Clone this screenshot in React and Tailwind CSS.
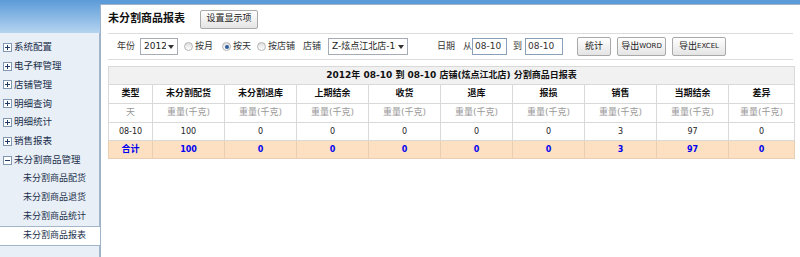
import React from "react";

const font = { fontFamily: '"DejaVu Sans", "Noto Sans CJK SC", sans-serif' };

const menu = ["系统配置", "电子秤管理", "店铺管理", "明细查询", "明细统计", "销售报表"];
const subMenu = ["未分割商品配货", "未分割商品退货", "未分割商品统计"];

const cols = ["未分割配货", "未分割退库", "上期结余", "收货", "退库", "报损", "销售", "当期结余", "差异"];
const values = ["100", "0", "0", "0", "0", "0", "3", "97", "0"];

function BoxIcon({ minus }) {
  return (
    <svg width="9" height="9" viewBox="0 0 9 9" className="shrink-0">
      <rect x="0.5" y="0.5" width="8" height="8" fill="#fff" stroke="#7f97b2" />
      <line x1="2" y1="4.5" x2="7" y2="4.5" stroke="#1f3b66" />
      {!minus && <line x1="4.5" y1="2" x2="4.5" y2="7" stroke="#1f3b66" />}
    </svg>
  );
}

function Radio({ checked, className }) {
  return (
    <span className={`shrink-0 w-[9px] h-[9px] rounded-full border border-[#b4b4b4] bg-gradient-to-b from-[#dedede] to-white flex items-center justify-center ${className}`}>
      {checked && <span className="w-[4px] h-[4px] rounded-full bg-[#2c5d9c]" />}
    </span>
  );
}

function Select({ w, className, children }) {
  return (
    <div className={`shrink-0 h-[17px] border border-[#a5acb5] bg-white flex items-center justify-between pl-[3px] pr-[3px] ${w} ${className}`}>
      <span className="text-[9px] text-[#222] whitespace-nowrap overflow-hidden">{children}</span>
      <svg width="6" height="4" viewBox="0 0 6 4" className="shrink-0 ml-[2px]">
        <path d="M0 0h6L3 4z" fill="#333" />
      </svg>
    </div>
  );
}

function Btn({ children, w, className }) {
  return (
    <div className={`shrink-0 h-[19px] border border-[#a9a9a9] rounded-[2px] bg-gradient-to-b from-white to-[#e4e4e4] flex items-center justify-center text-[9px] text-[#222] whitespace-nowrap ${w} ${className}`}>
      {children}
    </div>
  );
}

function Label({ w, className, children }) {
  return <span className={`shrink-0 whitespace-nowrap ${w} ${className}`}>{children}</span>;
}

export default function App() {
  return (
    <div className="w-[800px] h-[257px] flex bg-white overflow-hidden text-[9px]" style={font}>
      {/* Sidebar */}
      <div className="w-[100px] flex flex-col shrink-0">
        <div className="h-[33px] bg-gradient-to-b from-[#5b9bd8] to-[#b5d4f0]" />
        <div className="h-[193px] bg-[#e9eff6] border-r border-[#a3b6ca] pt-[5px] flex flex-col">
          {menu.map((m) => (
            <div key={m} className="h-[19px] flex items-center gap-[2px] pl-[3px] text-[#1b2f4c] text-[9.5px] whitespace-nowrap">
              <BoxIcon />
              <span>{m}</span>
            </div>
          ))}
          <div className="h-[19px] flex items-center gap-[2px] pl-[3px] text-[#1b2f4c] text-[9.5px] whitespace-nowrap">
            <BoxIcon minus />
            <span>未分割商品管理</span>
          </div>
          {subMenu.map((m) => (
            <div key={m} className="h-[19px] flex items-center pl-[23px] text-[#1b2f4c] whitespace-nowrap">
              {m}
            </div>
          ))}
        </div>
        <div className="h-[19px] bg-white flex items-center pl-[23px] text-[#1b2f4c] border-t border-[#a3b6ca] whitespace-nowrap">
          未分割商品报表
        </div>
        <div className="flex-1 bg-[#e9eff6] border-r border-t border-[#a3b6ca]" />
      </div>

      {/* Main */}
      <div className="flex-1 flex flex-col">
        <div className="h-[4px] bg-[#5b9bd8]" />
        <div className="flex-1 bg-white border-l border-t border-[#9fb3c8] flex flex-col">
          <div className="h-[28px] flex items-center pl-[7px]">
            <span className="text-[11px] font-bold text-[#111] whitespace-nowrap w-[80px]">未分割商品报表</span>
            <Btn w="w-[58px]" className="ml-[12px]">设置显示项</Btn>
          </div>
          <div className="mx-[7px] h-[27px] border-t border-b border-[#dcdcdc] flex items-center text-[#333]">
            <Label w="w-[18px]" className="ml-[9px]">年份</Label>
            <Select w="w-[38px]" className="ml-[5px]">2012</Select>
            <Radio className="ml-[6px]" />
            <Label w="w-[18px]" className="ml-[2px]">按月</Label>
            <Radio checked className="ml-[9px]" />
            <Label w="w-[18px]" className="ml-[2px]">按天</Label>
            <Radio className="ml-[6px]" />
            <Label w="w-[27px]" className="ml-[2px]">按店铺</Label>
            <Label w="w-[18px]" className="ml-[8px]">店铺</Label>
            <Select w="w-[80px]" className="ml-[7px]">Z-炫点江北店-1(</Select>
            <Label w="w-[18px]" className="ml-[29px]">日期</Label>
            <Label w="w-[9px]" className="ml-[8px]">从</Label>
            <div className="shrink-0 w-[35px] h-[17px] border border-[#8aa0b8] bg-white pl-[2px] flex items-center">08-10</div>
            <Label w="w-[9px]" className="ml-[6px]">到</Label>
            <div className="shrink-0 ml-[3px] w-[38px] h-[17px] border border-[#8aa0b8] bg-white pl-[2px] flex items-center">08-10</div>
            <Btn w="w-[34px]" className="ml-[14px]">统计</Btn>
            <Btn w="w-[49px]" className="ml-[6px]">导出<span className="text-[7px]">WORD</span></Btn>
            <Btn w="w-[54px]" className="ml-[6px]">导出<span className="text-[7px]">EXCEL</span></Btn>
          </div>

          <table className="mt-[6px] ml-[7px] w-[686px] border-collapse table-fixed">
            <colgroup>
              <col className="w-[44px]" />
              {cols.map((c, i) => (
                <col key={c} className={i === cols.length - 1 ? "w-[66px]" : "w-[72px]"} />
              ))}
            </colgroup>
            <tbody>
              <tr className="h-[18px] bg-[#f1f1f1]">
                <td colSpan={10} className="border border-[#d9d9d9] text-center font-bold text-[#111] whitespace-nowrap">
                  2012年 08-10 到 08-10 店铺(炫点江北店) 分割商品日报表
                </td>
              </tr>
              <tr className="h-[19px]">
                <td className="border border-[#d9d9d9] text-center font-bold text-[#111]">类型</td>
                {cols.map((c) => (
                  <td key={c} className="border border-[#d9d9d9] text-center font-bold text-[#111]">{c}</td>
                ))}
              </tr>
              <tr className="h-[19px]">
                <td className="border border-[#d9d9d9] text-center text-[#999]">天</td>
                {cols.map((c) => (
                  <td key={c} className="border border-[#d9d9d9] text-center text-[#999]">重量(千克)</td>
                ))}
              </tr>
              <tr className="h-[18px]">
                <td className="border border-[#d9d9d9] text-center text-[#222] text-[8px]">08-10</td>
                {values.map((v, i) => (
                  <td key={i} className="border border-[#d9d9d9] text-center text-[#222] text-[8px]">{v}</td>
                ))}
              </tr>
              <tr className="h-[18px] bg-[#fde0c2]">
                <td className="border border-[#e8cfb4] text-center text-[#0000ee] font-bold">合计</td>
                {values.map((v, i) => (
                  <td key={i} className="border border-[#e8cfb4] text-center text-[#0000ee] font-bold text-[8px]">{v}</td>
                ))}
              </tr>
            </tbody>
          </table>
        </div>
      </div>
    </div>
  );
}
